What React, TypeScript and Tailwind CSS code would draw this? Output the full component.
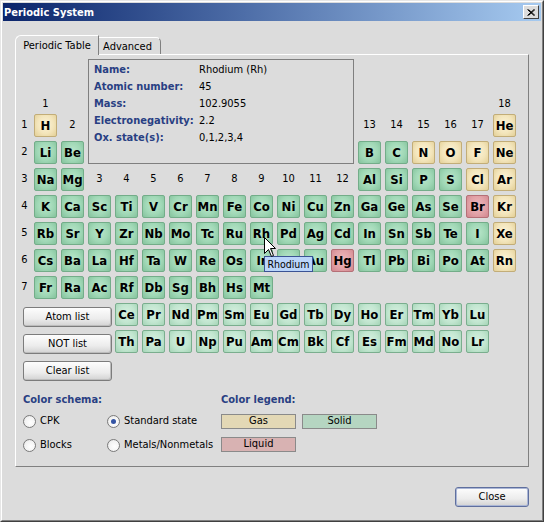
import React from "react";

const F = "font-['DejaVu_Sans_Condensed','DejaVu_Sans','Liberation_Sans',sans-serif]";

type El = { s: string; c: number; r: number; t: string };

const els: El[] = [];
function add(row: number, start: number, list: string, special: Record<string, string> = {}, kind = "s") {
  list.split(" ").forEach((s, i) => {
    els.push({ s, c: start + i, r: row, t: special[s] || kind });
  });
}
add(1, 1, "H", { H: "g" });
add(1, 18, "He", { He: "g" });
add(2, 1, "Li Be");
add(2, 13, "B C N O F Ne", { N: "g", O: "g", F: "g", Ne: "g" });
add(3, 1, "Na Mg");
add(3, 13, "Al Si P S Cl Ar", { Cl: "g", Ar: "g" });
add(4, 1, "K Ca Sc Ti V Cr Mn Fe Co Ni Cu Zn Ga Ge As Se Br Kr", { Br: "l", Kr: "g" });
add(5, 1, "Rb Sr Y Zr Nb Mo Tc Ru Rh Pd Ag Cd In Sn Sb Te I Xe", { Xe: "g" });
add(6, 1, "Cs Ba La Hf Ta W Re Os Ir Pt Au Hg Tl Pb Bi Po At Rn", { Hg: "l", Rn: "g" });
add(7, 1, "Fr Ra Ac Rf Db Sg Bh Hs Mt");
add(8, 4, "Ce Pr Nd Pm Sm Eu Gd Tb Dy Ho Er Tm Yb Lu", {}, "f");
add(9, 4, "Th Pa U Np Pu Am Cm Bk Cf Es Fm Md No Lr", {}, "f");

const cellCls: Record<string, string> = {
  s: "border-[#73ad89] bg-[radial-gradient(ellipse_at_50%_45%,#bae6cb_0%,#a0d8b6_55%,#84c29c_100%)]",
  f: "border-[#7aae8e] bg-[radial-gradient(ellipse_at_50%_45%,#d6f0e0_0%,#c2e6d0_55%,#a4d4b6_100%)]",
  g: "border-[#c2ad78] bg-[radial-gradient(ellipse_at_50%_45%,#fbf3d8_0%,#f3e5bb_55%,#e3cf96_100%)]",
  l: "border-[#b57077] bg-[radial-gradient(ellipse_at_50%_45%,#eeb8bc_0%,#e2a2a7_55%,#d1868e_100%)]",
};

function Radio({ label, checked }: { label: string; checked?: boolean }) {
  return (
    <div className="flex items-center gap-[4px] h-[24px]">
      <span className="w-[13px] h-[13px] rounded-full border border-[#7a7a7a] bg-[radial-gradient(circle_at_60%_60%,#ffffff_0%,#f2f2f2_60%,#d8d8d8_100%)] flex items-center justify-center">
        {checked && <span className="w-[5px] h-[5px] rounded-full bg-[#3454a4]" />}
      </span>
      <span>{label}</span>
    </div>
  );
}

function Btn({ label }: { label: string }) {
  return (
    <div className="ml-[4px] mt-[4px] h-[20px] w-[89px] rounded-[3px] border border-[#7c7c7c] bg-[linear-gradient(#fdfdfd,#ececec_60%,#d2d2d2)] flex items-center justify-center shadow-[inset_-1px_-1px_0_#bcbcbc]">
      {label}
    </div>
  );
}

export default function App() {
  const info: [string, string][] = [
    ["Name:", "Rhodium (Rh)"],
    ["Atomic number:", "45"],
    ["Mass:", "102.9055"],
    ["Electronegativity:", "2.2"],
    ["Ox. state(s):", "0,1,2,3,4"],
  ];
  return (
    <div className={`w-[544px] h-[522px] bg-[#dcdcdc] border border-t-[#e6e6e6] border-l-[#e6e6e6] border-r-[#404040] border-b-[#404040] text-[11px] text-black ${F}`}>
      <div className="h-full border border-t-white border-l-white border-r-[#808080] border-b-[#808080] p-px flex flex-col">
        {/* Title bar */}
        <div className="h-[18px] bg-[linear-gradient(90deg,#0a246a,#4e6ea8_45%,#a6caf0)] flex items-center justify-between pl-[1px] pr-[2px]">
          <span className="text-white font-bold text-[11px] leading-none">Periodic System</span>
          <div className="w-[16px] h-[14px] bg-[#dcdcdc] border border-t-white border-l-white border-r-[#404040] border-b-[#404040] flex items-center justify-center">
            <svg width="8" height="7" viewBox="0 0 8 7">
              <path d="M0.5 0.5 L7 6.5 M1.5 0.5 L8 6.5 M7 0.5 L0.5 6.5 M8 0.5 L1.5 6.5" stroke="#000" strokeWidth="1" />
            </svg>
          </div>
        </div>

        {/* Body */}
        <div className="flex-1 flex flex-col pl-[12px] pr-[12px] pt-[14px]">
          {/* Tabs */}
          <div className="flex items-end h-[19px] relative z-10">
            <div className="h-[20px] -mb-px w-[84px] bg-[#dcdcdc] border-l border-t border-r border-l-white border-t-white border-r-[#808080] rounded-tl-[6px] flex items-start justify-center pt-[2px]">
              Periodic Table
            </div>
            <div className="h-[17px] w-[62px] border-t border-r border-t-white border-r-[#808080] rounded-tr-[5px] flex items-start justify-center pt-[1px] pr-[4px]">
              Advanced
            </div>
          </div>

          {/* Panel */}
          <div className="h-[413px] border border-t-white border-l-white border-r-[#808080] border-b-[#808080] pl-[3px] pt-[4px]">
            <div className="relative grid grid-cols-[11px_repeat(18,23px)] grid-rows-[24px_repeat(11,23px)] gap-[4px]">
              {/* Info box */}
              <div className="col-start-4 col-end-14 row-start-1 row-end-5 border border-[#7f7f7f] pt-[2px] pl-[5px]">
                {info.map(([k, v]) => (
                  <div key={k} className="flex h-[17px] items-center">
                    <span className="w-[105px] font-bold text-[#293f83]">{k}</span>
                    <span>{v}</span>
                  </div>
                ))}
              </div>

              {/* Group labels */}
              <div className="col-start-2 row-start-2 flex items-end justify-center leading-[13px]">1</div>
              <div className="col-start-19 row-start-2 flex items-end justify-center leading-[13px]">18</div>
              <div className="col-start-3 row-start-3 flex items-center justify-center">2</div>
              {[13, 14, 15, 16, 17].map((g) => (
                <div key={g} className="row-start-3 flex items-center justify-center" style={{ gridColumnStart: g + 1 }}>
                  {g}
                </div>
              ))}
              {[3, 4, 5, 6, 7, 8, 9, 10, 11, 12].map((g) => (
                <div key={g} className="row-start-5 flex items-center justify-center" style={{ gridColumnStart: g + 1 }}>
                  {g}
                </div>
              ))}
              {/* Period labels */}
              {[1, 2, 3, 4, 5, 6, 7].map((p) => (
                <div key={p} className="col-start-1 flex items-center justify-center" style={{ gridRowStart: p + 2 }}>
                  {p}
                </div>
              ))}

              {/* Elements */}
              {els.map((e) => (
                <div
                  key={e.s}
                  className={`border rounded-[2px] flex items-center justify-center font-bold text-[13px] ${cellCls[e.t]}`}
                  style={{ gridColumnStart: e.c + 1, gridRowStart: e.r + 2 }}
                >
                  {e.s}
                </div>
              ))}

              {/* Buttons */}
              <div className="col-start-1 col-end-5 row-start-10">
                <Btn label="Atom list" />
              </div>
              <div className="col-start-1 col-end-5 row-start-11">
                <Btn label="NOT list" />
              </div>
              <div className="col-start-1 col-end-5 row-start-12">
                <Btn label="Clear list" />
              </div>

              {/* Cursor */}
              <svg className="absolute left-[245px] top-[178px] z-20" width="13" height="21" viewBox="0 0 13 21">
                <path d="M0.5 0.5 L0.5 16.5 L4.5 12.5 L7.5 19.5 L9.5 18.5 L6.5 11.5 L11.5 11.5 Z" fill="#fff" stroke="#000" strokeWidth="1" />
              </svg>
              {/* Tooltip */}
              <div className="absolute z-10 left-[245px] top-[197px] h-[16px] w-[49px] bg-[#bad5fa] border border-[#3b5394] flex items-center justify-center leading-none text-[10.5px]">
                Rhodium
              </div>
            </div>

            {/* Bottom section */}
            <div className="mt-[13px] pl-[4px] flex">
              <div className="w-[198px]">
                <div className="h-[14px] leading-[14px] font-bold text-[#293f83]">Color schema:</div>
                <div className="mt-[2px] grid grid-cols-[84px_auto]">
                  <Radio label="CPK" />
                  <Radio label="Standard state" checked />
                  <Radio label="Blocks" />
                  <Radio label="Metals/Nonmetals" />
                </div>
              </div>
              <div>
                <div className="h-[14px] leading-[14px] font-bold text-[#293f83]">Color legend:</div>
                <div className="mt-[7px] grid grid-cols-[75px_75px] gap-x-[6px] gap-y-[8px]">
                  <div className="h-[15px] border border-[#8a8a8a] bg-[#e3d8b5] flex items-center justify-center">Gas</div>
                  <div className="h-[15px] border border-[#8a8a8a] bg-[#b5d5c1] flex items-center justify-center">Solid</div>
                  <div className="h-[15px] border border-[#8a8a8a] bg-[#d8b2b2] flex items-center justify-center">Liquid</div>
                </div>
              </div>
            </div>
          </div>

          {/* Close */}
          <div className="flex justify-end mt-[20px]">
            <div className="h-[20px] w-[74px] rounded-[3px] border border-[#5f6f9e] bg-[linear-gradient(#fdfdfd,#ececec_60%,#d2d2d2)] shadow-[inset_0_0_0_1px_#aab6d6] flex items-center justify-center">
              Close
            </div>
          </div>
        </div>
      </div>
    </div>
  );
}
